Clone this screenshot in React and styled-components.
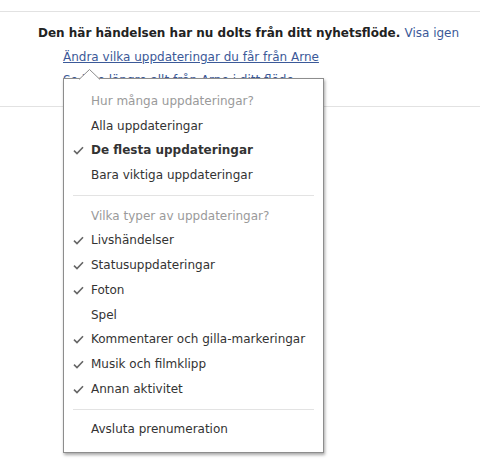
import React from "react";
import styled, { createGlobalStyle } from "styled-components";

const Global = createGlobalStyle`
  html, body { margin: 0; padding: 0; background: #fff; }
  body { font-family: "DejaVu Sans", Verdana, sans-serif; color: #333; }
`;

const Page = styled.div`
  width: 480px;
  height: 464px;
  padding-top: 11px;
  box-sizing: border-box;
  position: relative;
  overflow: hidden;
`;

const Story = styled.div`
  border-top: 1px solid #e2e2e2;
  border-bottom: 1px solid #e2e2e2;
  padding: 10px 0 14px 38px;
  display: flex;
  flex-direction: column;
`;

const Notice = styled.div`
  font-size: 12px;
  line-height: 23px;
  font-weight: bold;
  color: #222;
  white-space: nowrap;
`;

const Inline = styled.a`
  font-weight: normal;
  color: #3b5998;
  text-decoration: none;
`;

const Link = styled.a`
  display: block;
  margin-left: 25px;
  margin-top: ${(p) => p.$mt || 0}px;
  font-size: 12px;
  line-height: 23px;
  color: #3b5998;
  text-decoration: underline;
  white-space: nowrap;
`;

const Menu = styled.div`
  position: absolute;
  left: 63px;
  top: 78px;
  width: 261px;
  box-sizing: border-box;
  background: #fff;
  border: 1px solid #8d8d8d;
  box-shadow: 1px 2px 3px rgba(0, 0, 0, 0.35);
  padding: 10px 0 10px 0;
`;

const Caret = styled.svg`
  position: absolute;
  left: 15px;
  top: -10px;
`;

const Item = styled.div`
  position: relative;
  height: 24.7px;
  line-height: 24.7px;
  padding-left: 27px;
  font-size: 12px;
  white-space: nowrap;
  color: ${(p) => (p.$head ? "#9a9a9a" : "#333")};
  font-weight: ${(p) => (p.$bold ? "bold" : "normal")};
`;

const Check = styled.svg`
  position: absolute;
  left: 9px;
  top: 8px;
`;

const Sep = styled.div`
  height: 1px;
  background: #e3e3e3;
  margin: 7.5px 9px 7.5px 9px;
`;

const Tick = () => (
  <Check width="11" height="9" viewBox="0 0 11 9">
    <path d="M1 4.6 L4 7.6 L10 1.2" fill="none" stroke="#666" strokeWidth="1.6" />
  </Check>
);

const groups = [
  {
    head: "Hur många uppdateringar?",
    items: [
      ["Alla uppdateringar", false, false],
      ["De flesta uppdateringar", true, true],
      ["Bara viktiga uppdateringar", false, false],
    ],
  },
  {
    head: "Vilka typer av uppdateringar?",
    items: [
      ["Livshändelser", true],
      ["Statusuppdateringar", true],
      ["Foton", true],
      ["Spel", false],
      ["Kommentarer och gilla-markeringar", true],
      ["Musik och filmklipp", true],
      ["Annan aktivitet", true],
    ],
  },
];

export default function App() {
  return (
    <>
      <Global />
      <Page>
        <Story>
          <Notice>
            Den här händelsen har nu dolts från ditt nyhetsflöde.{" "}
            <Inline href="#">Visa igen</Inline>
          </Notice>
          <Link href="#" $mt={1}>Ändra vilka uppdateringar du får från Arne</Link>
          <Link href="#">Se inte längre allt från Arne i ditt flöde</Link>
        </Story>
        <Menu>
          <Caret width="22" height="11" viewBox="0 0 22 11">
            <path d="M0 10.5 L10.5 0.5 L21 10.5" fill="#fff" stroke="#8d8d8d" strokeWidth="1" />
          </Caret>
          {groups.map((g, gi) => (
            <React.Fragment key={gi}>
              {gi > 0 && <Sep />}
              <Item $head>{g.head}</Item>
              {g.items.map(([t, c, b]) => (
                <Item key={t} $bold={b}>
                  {c && <Tick />}
                  {t}
                </Item>
              ))}
            </React.Fragment>
          ))}
          <Sep />
          <Item>Avsluta prenumeration</Item>
        </Menu>
      </Page>
    </>
  );
}
